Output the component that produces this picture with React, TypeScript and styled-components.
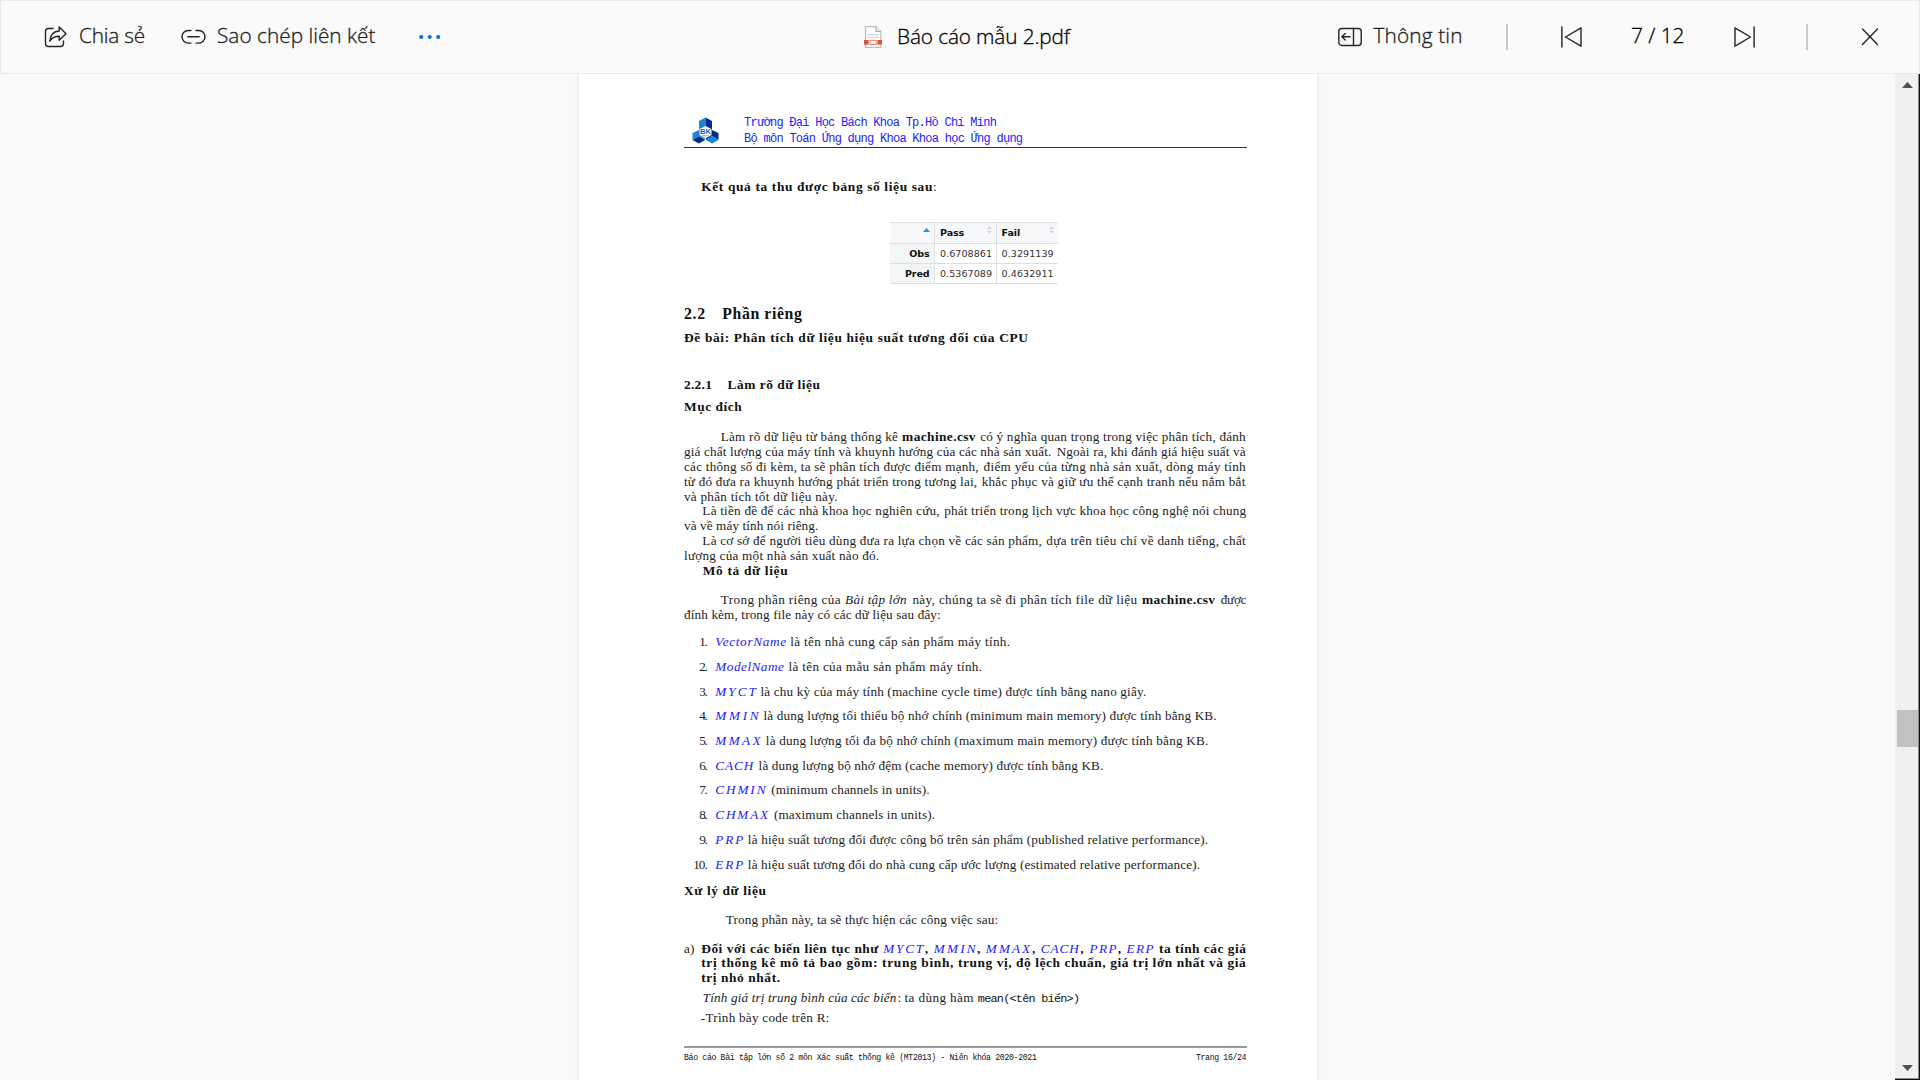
import React, { useLayoutEffect, useRef, useState } from "react";
import styled, { createGlobalStyle, css } from "styled-components";

const GlobalStyle = createGlobalStyle`
  * { box-sizing: border-box; }
  html, body { margin: 0; padding: 0; overflow: hidden; background: #faf9f8; }
`;

/* ---------- typeset text ---------- */

type Kind = "rm" | "bf" | "it" | "math" | "tt" | "head" | "h2" | "foot" | "ui" | "title";

const kinds = {
  rm: css`font-size: 13.2px; color: #1c1c1c;`,
  bf: css`font-size: 13.4px; font-weight: 700; color: #111;`,
  it: css`font-size: 13.2px; font-style: italic; color: #222;`,
  math: css`font-size: 13.2px; font-style: italic; color: #1a1aff;`,
  tt: css`font-family: "Liberation Mono", monospace; font-size: 11.8px; color: #111;`,
  head: css`font-family: "Liberation Mono", monospace; font-size: 12px; color: #2222ff;`,
  h2: css`font-size: 15.8px; font-weight: 700; color: #111;`,
  foot: css`font-family: "Liberation Mono", monospace; font-size: 8.2px; color: #111;`,
  ui: css`
    font-family: "Open Sans", "Noto Sans", sans-serif;
    font-weight: 300;
    font-size: 20.8px;
    color: #1c1c1c;
    -webkit-text-stroke: 0.3px #1c1c1c;
  `,
  title: css`
    font-family: "Open Sans", "Noto Sans", sans-serif;
    font-weight: 300;
    font-size: 20.8px;
    color: #000;
    -webkit-text-stroke: 0.3px #000;
  `,
};

const Slot = styled.span<{ $w: number; $ml?: number }>`
  flex: none;
  width: ${(p) => p.$w}px;
  margin-left: ${(p) => p.$ml ?? 0}px;
  white-space: pre;
`;

const Glyphs = styled.span<{ $kind: Kind }>`
  display: inline-block;
  ${(p) => kinds[p.$kind]}
`;

/** Text tracked so that it fills exactly the given measure. */
function Fit({ w, ml, kind, children }: { w: number; ml?: number; kind: Kind; children: string }) {
  const ref = useRef<HTMLSpanElement>(null);
  const [track, setTrack] = useState(0);
  useLayoutEffect(() => {
    const el = ref.current!;
    const n = Array.from(children).length;
    el.style.letterSpacing = "0px";
    const natural = el.getBoundingClientRect().width;
    const next = n > 1 ? (w - natural) / (n - 1) : 0;
    el.style.letterSpacing = `${next}px`;
    setTrack(next);
  }, [w, children]);
  return (
    <Slot $w={w} $ml={ml}>
      <Glyphs ref={ref} $kind={kind} style={{ letterSpacing: `${track}px` }}>
        {children}
      </Glyphs>
    </Slot>
  );
}

const LineBox = styled.div<{ $gap: number }>`
  display: flex;
  align-items: baseline;
  height: 14.83px;
  line-height: 14.83px;
  margin-top: ${(p) => p.$gap}px;
`;

/* Horizontal stops are in typesetting units, measured from the sheet's text origin. */
const UNIT = 1 / 2.6133;
const ORIGIN = 37;
type Seg = [number, number, Kind, string];

function Line({ gap = 0, segs }: { gap?: number; segs: Seg[] }) {
  let cursor = ORIGIN;
  return (
    <LineBox $gap={gap}>
      {segs.map(([from, to, kind, text], i) => {
        const ml = (from - cursor) * UNIT;
        cursor = to;
        return (
          <Fit key={i} w={(to - from) * UNIT} ml={ml} kind={kind}>
            {text}
          </Fit>
        );
      })}
    </LineBox>
  );
}

/* ---------- shell ---------- */

const Shell = styled.div`
  width: 1920px;
  height: 1080px;
  display: flex;
  flex-direction: column;
  background: #faf9f8;
  overflow: hidden;
`;

const Toolbar = styled.header`
  flex: none;
  height: 74px;
  display: flex;
  justify-content: space-between;
  align-items: center;
  padding: 0 40px 1px 43px;
  background: #fafafa;
  border: 1px solid #e9e9e9;
`;

const Group = styled.div`
  display: flex;
  align-items: center;
  height: 28px;
  line-height: 30px;
`;

const Action = styled.button<{ $ml?: number }>`
  display: flex;
  align-items: center;
  padding: 0;
  border: 0;
  background: none;
  height: 28px;
  line-height: 30px;
  margin-left: ${(p) => p.$ml ?? 0}px;

  ${Slot} {
    padding-top: 1px;
  }
`;

const TitleBox = styled.div`
  display: flex;
  align-items: center;
  height: 28px;
  margin-right: 267.5px;

  ${Slot} {
    padding-top: 1px;
  }
`;

const Icon = styled.svg`
  display: block;
  flex: none;
  fill: none;
  stroke: #242424;
  stroke-width: 1.4;
  stroke-linecap: round;
  stroke-linejoin: round;
`;

const Divider = styled.i<{ $ml: number; $c: string }>`
  width: 2px;
  height: 26px;
  margin-left: ${(p) => p.$ml}px;
  background: ${(p) => p.$c};
`;

const Viewer = styled.main`
  flex: 1;
  display: flex;
  min-height: 0;
`;

const Canvas = styled.div`
  flex: 1;
  display: flex;
  padding-left: 579px;
  overflow: hidden;
`;

const Sheet = styled.article`
  width: 738px;
  padding: 43px 0 0 105px;
  background: #fff;
  box-shadow: 0 2px 4px rgba(0, 0, 0, 0.16);
  font-family: "Liberation Serif", serif;
  display: flex;
  flex-direction: column;
`;

const Letterhead = styled.div`
  width: 563px;
  height: 31px;
  display: flex;
  padding-left: 7.7px;
  border-bottom: 1px solid #333;
`;

const HeadLines = styled.div`
  margin: -3.4px 0 0 25.4px;
  display: flex;
  flex-direction: column;
`;

const HeadLine = styled.div`
  display: flex;
  height: 17.6px;
  line-height: 14px;
`;

const FootRule = styled.div`
  width: 563px;
  height: 2px;
  margin-top: 20.8px;
  background: #9a9a9a;
`;

/* ---------- data table ---------- */

const Table = styled.div`
  display: grid;
  grid-template-columns: 45px 61.6px 61.4px;
  grid-template-rows: 21px 20px 20.7px;
  width: 168px;
  margin: 27.6px 0 0 206px;
  border-top: 1px solid #dcdfe2;
  font: 9.55px "DejaVu Sans", sans-serif;
`;

const Cell = styled.div<{ $tone?: "head" | "row"; $last?: boolean }>`
  display: flex;
  align-items: center;
  justify-content: ${(p) => (p.$tone === "row" ? "flex-end" : "space-between")};
  padding: 0 ${(p) => (p.$tone === "head" ? 4 : 4.5)}px 0 5px;
  color: ${(p) => (p.$tone ? "#111" : "#333")};
  font-weight: ${(p) => (p.$tone ? 700 : 400)};
  letter-spacing: ${(p) => (p.$tone ? "-0.1px" : "0.05px")};
  background: ${(p) => (p.$tone === "head" ? "#f6f7f9" : p.$tone === "row" ? "#f2f6f7" : "#fff")};
  border-bottom: 1px solid #dde0e3;
  border-right: ${(p) => (p.$last ? "0" : "1px solid #dde0e3")};
`;

const Sort = styled.svg`
  flex: none;
  margin: -5px 0 0 auto;
`;

/* ---------- scrollbar ---------- */

const Scrollbar = styled.aside`
  width: 25px;
  display: flex;
  flex-direction: column;
  align-items: center;
  padding: 8px 0 8px 2px;
  background: #f0f0f0;
  border-right: 1px solid #111;
  border-bottom: 1px solid #111;
  box-shadow: inset -1px -1px 0 #8a8a8a;
`;

const Thumb = styled.div`
  width: 21px;
  height: 37px;
  margin: 622px 1px auto 0;
  background: #c1c1c1;
`;

const Arrow = ({ down }: { down?: boolean }) => (
  <svg width="12" height="6" viewBox="0 0 12 6">
    <path d={down ? "M0 0h11L5.5 6z" : "M0 6h11L5.5 0z"} fill="#505050" />
  </svg>
);

const SortBoth = () => (
  <Sort width="5" height="8" viewBox="0 0 5 8">
    <path d="M2.5 0L5 3H0zM0 4.8h5L2.5 7.8z" fill="#cfd2d6" />
  </Sort>
);

const Logo = () => (
  <svg width="27" height="27" viewBox="0 0 54 54">
    <path d="M27 1L14 8v20l13-5z" fill="#1788d8" />
    <path d="M27 1l13 7v20l-13-5z" fill="#06288c" />
    <path d="M14 26L1 32v14l13-8z" fill="#1788d8" />
    <path d="M1 46l13-8 12 8-12 7z" fill="#06288c" />
    <path d="M14 26l12 7v13l-12-8z" fill="#1788d8" />
    <path d="M40 26l13 6v14l-13-8z" fill="#06288c" />
    <path d="M40 26l-12 7v13l12-8z" fill="#06288c" />
    <path d="M28 46l12-8 13 8-13 7z" fill="#1788d8" />
    <path d="M27 18l12 6v12l-12 7-12-7V24z" fill="#fff" />
    <text x="27" y="33" textAnchor="middle" fontFamily="Liberation Sans" fontWeight="700" fontSize="15" fill="#1b5fb4">
      BK
    </text>
    <path d="M20 37.500h14" stroke="#7db4e6" strokeWidth="2.5" />
  </svg>
);

const PdfIcon = () => (
  <svg width="18" height="22" viewBox="0 0 18 22">
    <path d="M1.5.6H12l4.9 4.9v15.9H1.5z" fill="#fff" stroke="#bdbdbd" strokeWidth="1.2" />
    <path d="M12 .6v4.9h4.9" fill="#eee" stroke="#a8a8a8" strokeWidth="1.1" />
    <path d="M3.2 8.8h11.6M3.2 11.3h11.6" stroke="#c6c6c6" strokeWidth="1.1" />
    <path d="M0 14h18v4.6H0z" fill="#d65532" />
    <path d="M4.6 13h8.8v6.6H4.6z" fill="#fff" />
    <rect x="6" y="14.3" width="6.2" height="4.2" fill="#fff" stroke="#e08266" strokeWidth="1" />
  </svg>
);

const items: [string, number, string, string, number, number][] = [
  ["1.", 304, "VectorName", "là tên nhà cung cấp sản phẩm máy tính.", 315, 889],
  ["2.", 298, "ModelName", "là tên của mẫu sản phẩm máy tính.", 310, 816],
  ["3.", 225, "MYCT", "là chu kỳ của máy tính (machine cycle time) được tính bằng nano giây.", 237, 1245],
  ["4.", 232, "MMIN", "là dung lượng tối thiểu bộ nhớ chính (minimum main memory) được tính bằng KB.", 245, 1429],
  ["5.", 237, "MMAX", "là dung lượng tối đa bộ nhớ chính (maximum main memory) được tính bằng KB.", 251, 1407],
  ["6.", 218, "CACH", "là dung lượng bộ nhớ đệm (cache memory) được tính bằng KB.", 232, 1133],
  ["7.", 250, "CHMIN", "(minimum channels in units).", 265, 679],
  ["8.", 257, "CHMAX", "(maximum channels in units).", 272, 693],
  ["9.", 192, "PRP", "là hiệu suất tương đối được công bố trên sản phẩm (published relative performance).", 204, 1407],
  ["10.", 192, "ERP", "là hiệu suất tương đối do nhà cung cấp ước lượng (estimated relative performance).", 204, 1386],
];

export default function App() {
  return (
    <Shell>
      <GlobalStyle />
      <Toolbar>
        <Group>
          <Action>
            <Icon width="24" height="24" viewBox="0 0 24 24">
              <path d="M9 3.5H4.5a3 3 0 0 0-3 3v12a3 3 0 0 0 3 3h12a3 3 0 0 0 3-3V16" />
              <path d="M15.2 2v4C9.5 6.3 6.3 10 5.8 16c2.3-3.3 5.2-4.7 9.4-4.7v4L22 8.7z" />
            </Icon>
            <Fit w={66} ml={11} kind="ui">Chia sẻ</Fit>
          </Action>
          <Action $ml={36}>
            <Icon width="25" height="24" viewBox="0 0 25 24">
              <path d="M10 5.500H7.300a6.300 6.300 0 0 0 0 12.600H10M15 5.500h2.700a6.300 6.300 0 0 1 0 12.600H15M6.800 11.800h11.400" />
            </Icon>
            <Fit w={158.5} ml={11} kind="ui">Sao chép liên kết</Fit>
          </Action>
          <Action $ml={43.5}>
            <svg width="22" height="6" viewBox="0 0 22 6">
              <g fill="#0f6fd6">
                <circle cx="2.2" cy="3" r="2.1" />
                <circle cx="10.7" cy="3" r="2.1" />
                <circle cx="19.2" cy="3" r="2.1" />
              </g>
            </svg>
          </Action>
        </Group>
        <Group>
          <TitleBox>
            <PdfIcon />
            <Fit w={173} ml={15} kind="title">Báo cáo mẫu 2.pdf</Fit>
          </TitleBox>
          <Action>
            <Icon width="24" height="20" viewBox="0 0 24 20">
              <rect x="0.8" y="1.5" width="22.4" height="17" rx="3" />
              <path d="M15.5 1.500v17M12 9.800H4M7.200 6.500L3.900 9.800l3.300 3.300" />
            </Icon>
            <Fit w={89} ml={12} kind="ui">Thông tin</Fit>
          </Action>
          <Divider $ml={43.5} $c="#c9c5cf" />
          <Action $ml={52.5}>
            <Icon width="21" height="22" viewBox="0 0 21 22">
              <path d="M.9 1v20M20 1.800v18.400L4.500 11z" />
            </Icon>
          </Action>
          <Fit w={53.5} ml={49.5} kind="title">7 / 12</Fit>
          <Action $ml={49.5}>
            <Icon width="21" height="22" viewBox="0 0 21 22">
              <path d="M20.100 1v20M1 1.800v18.400L16.500 11z" />
            </Icon>
          </Action>
          <Divider $ml={50.5} $c="#c3cccc" />
          <Action $ml={53.5}>
            <Icon width="18" height="18" viewBox="0 0 18 18">
              <path d="M1.500 1l15 15.500M16.500 1l-15 15.500" />
            </Icon>
          </Action>
        </Group>
      </Toolbar>

      <Viewer>
        <Canvas>
          <Sheet>
            <Letterhead>
              <Logo />
              <HeadLines>
                <HeadLine>
                  <Fit w={252.8} kind="head">Trường Đại Học Bách Khoa Tp.Hồ Chí Minh</Fit>
                </HeadLine>
                <HeadLine>
                  <Fit w={279} kind="head">Bộ môn Toán Ứng dụng Khoa Khoa học Ứng dụng</Fit>
                </HeadLine>
              </HeadLines>
            </Letterhead>

            <Line gap={31.1} segs={[[82, 686, "bf", "Kết quả ta thu được bảng số liệu sau"], [688, 693, "rm", ":"]]} />

            <Table>
              <Cell $tone="head">
                <Sort width="7" height="4" viewBox="0 0 7 4">
                  <path d="M3.5 0L7 4H0z" fill="#2a93e0" />
                </Sort>
              </Cell>
              <Cell $tone="head">Pass<SortBoth /></Cell>
              <Cell $tone="head" $last>Fail<SortBoth /></Cell>
              <Cell $tone="row">Obs</Cell>
              <Cell>0.6708861</Cell>
              <Cell $last>0.3291139</Cell>
              <Cell $tone="row">Pred</Cell>
              <Cell>0.5367089</Cell>
              <Cell $last>0.4632911</Cell>
            </Table>

            <Line gap={22.6} segs={[[37, 92, "h2", "2.2"], [137, 345, "h2", "Phần riêng"]]} />
            <Line gap={7.9} segs={[[37, 936, "bf", "Đề bài: Phân tích dữ liệu hiệu suất tương đối của CPU"]]} />
            <Line gap={32.5} segs={[[37, 110, "bf", "2.2.1"], [151, 392, "bf", "Làm rõ dữ liệu"]]} />
            <Line gap={7.5} segs={[[37, 188, "bf", "Mục đích"]]} />

            <Line gap={15.2} segs={[[133, 596, "rm", "Làm rõ dữ liệu từ bảng thống kê"], [607, 799, "bf", "machine.csv"], [811, 1505, "rm", "có ý nghĩa quan trọng trong việc phân tích, đánh"]]} />
            <Line segs={[[37, 997, "rm", "giá chất lượng của máy tính và khuynh hướng của các nhà sản xuất."], [1011, 1505, "rm", "Ngoài ra, khi đánh giá hiệu suất và"]]} />
            <Line segs={[[37, 807, "rm", "các thông số đi kèm, ta sẽ phân tích được điểm mạnh,"], [820, 1505, "rm", "điểm yếu của từng nhà sản xuất, dòng máy tính"]]} />
            <Line segs={[[37, 803, "rm", "từ đó đưa ra khuynh hướng phát triển trong tương lai,"], [815, 1504, "rm", "khắc phục và giữ ưu thế cạnh tranh nếu nắm bắt"]]} />
            <Line segs={[[37, 438, "rm", "và phân tích tốt dữ liệu này."]]} />
            <Line segs={[[85, 705, "rm", "Là tiền đề để các nhà khoa học nghiên cứu,"], [717, 1506, "rm", "phát triển trong lịch vực khoa học công nghệ nói chung"]]} />
            <Line segs={[[37, 388, "rm", "và về máy tính nói riêng."]]} />
            <Line segs={[[85, 972, "rm", "Là cơ sở để người tiêu dùng đưa ra lựa chọn về các sản phẩm,"], [984, 1505, "rm", "dựa trên tiêu chí về danh tiếng, chất"]]} />
            <Line segs={[[37, 547, "rm", "lượng của một nhà sản xuất nào đó."]]} />
            <Line gap={0.3} segs={[[86, 308, "bf", "Mô tả dữ liệu"]]} />

            <Line gap={14.3} segs={[[133, 446, "rm", "Trong phần riêng của"], [458, 619, "it", "Bài tập lớn"], [634, 1221, "rm", "này, chúng ta sẽ đi phân tích file dữ liệu"], [1234, 1425, "bf", "machine.csv"], [1440, 1507, "rm", "được"]]} />
            <Line segs={[[37, 708, "rm", "đính kèm, trong file này có các dữ liệu sau đây:"]]} />

            {items.map(([n, nameEnd, name, text, from, to], i) => (
              <Line
                key={n}
                gap={i === 0 ? 12.4 : 9.9}
                segs={[
                  [n.length > 2 ? 61 : 77, 99, "rm", n],
                  [119, nameEnd, "math", name],
                  [from, to, "rm", text],
                ]}
              />
            ))}

            <Line gap={11.9} segs={[[37, 251, "bf", "Xử lý dữ liệu"]]} />
            <Line gap={14.2} segs={[[146, 858, "rm", "Trong phần này, ta sẽ thực hiện các công việc sau:"]]} />

            <Line
              gap={13.5}
              segs={[
                [37, 64, "rm", "a)"],
                [82, 545, "bf", "Đối với các biến liên tục như"],
                [558, 662, "math", "MYCT"], [666, 673, "bf", ","],
                [690, 799, "math", "MMIN"], [803, 810, "bf", ","],
                [826, 942, "math", "MMAX"], [947, 954, "bf", ","],
                [970, 1069, "math", "CACH"], [1073, 1080, "bf", ","],
                [1097, 1168, "math", "PRP"], [1171, 1178, "bf", ","],
                [1194, 1265, "math", "ERP"],
                [1279, 1506, "bf", "ta tính các giá"],
              ]}
            />
            <Line gap={-0.6} segs={[[82, 741, "bf", "trị thống kê mô tả bao gồm: trung bình,"], [753, 1505, "bf", "trung vị, độ lệch chuẩn, giá trị lớn nhất và giá"]]} />
            <Line segs={[[82, 288, "bf", "trị nhỏ nhất."]]} />
            <Line gap={5.4} segs={[[86, 592, "it", "Tính giá trị trung bình của các biến"], [595, 600, "rm", ":"], [613, 794, "rm", "ta dùng hàm"], [805, 1072, "tt", "mean(<tên biến>)"]]} />
            <Line gap={5.2} segs={[[81, 417, "rm", "-Trình bày code trên R:"]]} />

            <FootRule />
            <Line gap={0.2} segs={[[37, 959, "foot", "Báo cáo Bài tập lớn số 2 môn Xác suất thống kê (MT2013) - Niên khóa 2020-2021"], [1375, 1507, "foot", "Trang 16/24"]]} />
          </Sheet>
        </Canvas>
        <Scrollbar>
          <Arrow />
          <Thumb />
          <Arrow down />
        </Scrollbar>
      </Viewer>
    </Shell>
  );
}
